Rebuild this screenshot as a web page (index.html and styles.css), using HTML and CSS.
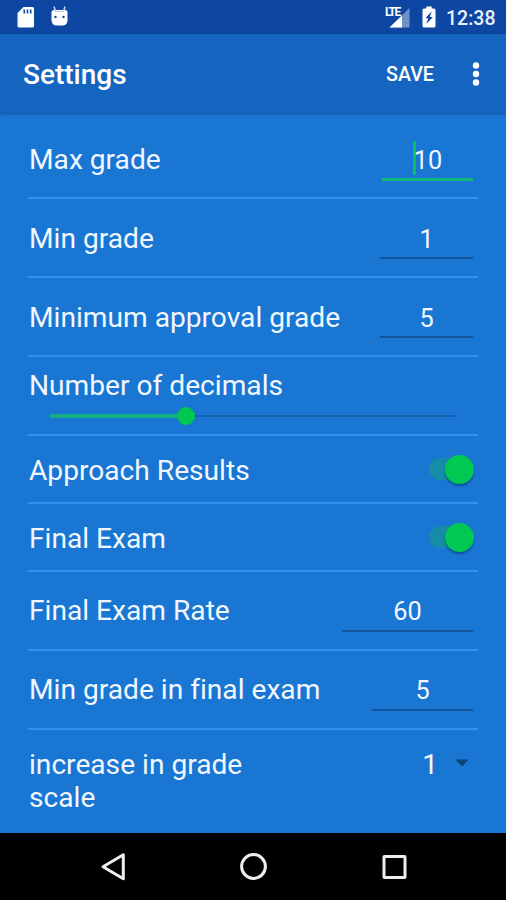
FILE: index.html
```html
<!DOCTYPE html>
<html lang="en">
<head>
<meta charset="utf-8">
<title>Settings</title>
<link rel="stylesheet" href="styles.css">
</head>
<body>
<div class="status">
  <svg class="sd" width="18" height="22" viewBox="0 0 18 22"><path fill="#fff" d="M6.500 1H15.500Q17 1 17 2.500V20Q17 21.500 15.500 21.500H2Q.5 21.500 .5 20V7Z"/><path stroke="#0d47a1" stroke-width="1.600" d="M7.300 3.500v4M10.500 3.500v4M13.700 3.500v4"/></svg>
  <svg class="droid" width="18" height="22" viewBox="0 0 18 22"><path fill="#fff" d="M.5 6.500Q.5 4 3 4H14Q16.500 4 16.500 6.500V14Q16.500 19.500 11 19.500H6Q.5 19.500 .5 14Z"/><path stroke="#c9d7f0" stroke-width="1.500" d="M3 .5l1.500 5M14 .5l-1.500 5"/><path stroke="#b4c7ea" d="M4 5.500h9"/><circle cx="4.500" cy="11" r="1.200" fill="#0d47a1"/><circle cx="12.500" cy="11" r="1.200" fill="#0d47a1"/></svg>
  <div class="right">
    <div class="signal"><span class="lte">LTE</span>
      <svg width="21" height="20" viewBox="0 0 21 20"><path fill="#6f91ca" d="M20.500 0V19.500H0.500Z"/><path fill="#fff" d="M13 7.500V19.500H.5Z"/></svg></div>
    <svg class="battery" width="14" height="22" viewBox="0 0 14 22"><path fill="#fff" d="M4.300 .5h5.400v2H12Q13.500 2.500 13.500 4V20Q13.500 21.500 12 21.500H2Q.5 21.500 .5 20V4Q.5 2.500 2 2.500H4.300Z"/><path fill="#0d47a1" d="M9.800 5.500L3.300 12.200H6.300L4.300 18L10.900 10.900H7.800Z"/></svg>
    <span class="clock">12:38</span>
  </div>
</div>
<header class="bar">
  <h1>Settings</h1>
  <span class="save">SAVE</span>
  <svg width="8" height="24" viewBox="0 0 8 24" fill="#fff"><circle cx="4" cy="3.500" r="3.200"/><circle cx="4" cy="12" r="3.200"/><circle cx="4" cy="20.500" r="3.200"/></svg>
</header>
<main class="list">
  <div class="row grade"><span class="label">Max grade</span><span class="field active"><span class="caret"></span>10</span></div>
  <div class="row grade"><span class="label">Min grade</span><span class="field small">1</span></div>
  <div class="row grade"><span class="label">Minimum approval grade</span><span class="field small">5</span></div>
  <div class="row slider-row"><span class="label">Number of decimals</span>
    <div class="slider"><span class="fill"></span><span class="thumb"></span><span class="rest"></span></div></div>
  <div class="row short"><span class="label">Approach Results</span><span class="switch"><span class="knob"></span></span></div>
  <div class="row short"><span class="label">Final Exam</span><span class="switch"><span class="knob"></span></span></div>
  <div class="row"><span class="label">Final Exam Rate</span><span class="field wide">60</span></div>
  <div class="row"><span class="label">Min grade in final exam</span><span class="field medium">5</span></div>
  <div class="row last"><span class="label">increase in grade<br>scale</span><span class="select">1<svg width="14" height="8" viewBox="0 0 14 8"><path fill="#0f4274" d="M.5 .5H13.500L7 7.500Z"/></svg></span></div>
</main>
<nav class="nav">
  <svg width="28" height="30" viewBox="0 0 28 30"><path d="M24.300 2.800V26.700L4 14.800Z"/></svg>
  <svg width="28" height="30" viewBox="0 0 28 30"><circle cx="13.500" cy="14.500" r="11.900"/></svg>
  <svg width="28" height="30" viewBox="0 0 28 30"><rect x="3" y="4.500" width="21" height="21" rx=".5"/></svg>
</nav>
</body>
</html>
```
FILE: styles.css
```css
* { box-sizing: border-box; }
body {
  margin: 0;
  width: 506px;
  height: 900px;
  overflow: hidden;
  display: flex;
  flex-direction: column;
  background: #1976d2;
  color: #f2f7ff;
  font-family: Roboto, sans-serif;
  font-variant-ligatures: none;
}
.status {
  height: 34px;
  flex: none;
  display: flex;
  align-items: flex-start;
  padding: 6px 10px 0 17px;
  background: #0d47a1;
}
.droid { margin-left: 16px; }
.right { display: flex; margin-left: auto; }
.signal { display: flex; width: 25px; height: 22px; justify-content: flex-end; align-items: flex-end; position: relative; }
.lte { position: absolute; left: 0; top: 0; font-size: 12px; line-height: 12px; font-weight: 700; letter-spacing: -1.6px; color: #fff; }
.battery { margin-left: 12px; }
.clock { margin-left: 10px; font-size: 19.5px; line-height: 25px; font-weight: 500; width: 50px; white-space: nowrap; color: #e8efff; }
.bar {
  height: 79px;
  flex: none;
  display: flex;
  align-items: center;
  padding: 0 26px 0 23px;
  background: #1565c0;
  box-shadow: 0 1px 3px rgba(0, 30, 80, .4);
  color: #fff;
}
.bar h1 { margin: 0; font-size: 28px; font-weight: 500; line-height: 36px; margin-top: 3px; }
.save { margin-left: auto; margin-right: 38px; font-size: 19.7px; font-weight: 500; margin-top: 2px; }
.list { flex: 1; padding: 7px 28px 0; }
.row {
  height: 79px;
  display: flex;
  justify-content: space-between;
  align-items: flex-start;
  padding: 22px 5px 0 0;
  border-bottom: 2px solid #3590ed;
}
.label { font-size: 28.15px; line-height: 34px; padding-left: 1px; white-space: nowrap; }
.grade .label { line-height: 36px; }
.field {
  width: 91px;
  height: 38px;
  display: flex;
  justify-content: center;
  font-size: 25.3px;
  line-height: 36px;
  border-bottom: 2px solid #125399;
}
.grade .field { line-height: 37px; }
.active { border-bottom: 3px solid #13b878; height: 39px; }
.caret { width: 3px; height: 34px; margin: -1px -2px 0 0; background: #08c05d; }
.small { width: 93px; }
.medium { width: 101px; }
.wide { width: 131px; }
.slider-row { flex-direction: column; justify-content: flex-start; padding-top: 12px; }
.slider { display: flex; align-items: center; width: 406px; height: 18px; margin: 4px 0 0 22px; }
.fill { width: 127px; height: 4px; background: #13b07f; }
.thumb { width: 18px; height: 18px; border-radius: 50%; background: #00c853; }
.rest { flex: 1; height: 2px; background: #1661ae; }
.short { height: 68px; padding: 18px 4px 0 0; }
.switch { width: 45px; height: 22px; margin-top: 4px; display: flex; align-items: center; justify-content: flex-end; border-radius: 11px; background: #168ca7; }
.knob { width: 29px; height: 29px; flex: none; border-radius: 50%; background: #00c853; box-shadow: 0 2px 2px rgba(0, 35, 90, .45); }
.last { height: 103px; padding-top: 18px; border: 0; }
.last .label { line-height: 33px; }
.select { display: flex; align-items: center; gap: 17px; padding-right: 4px; font-size: 28.1px; line-height: 33px; }
.select svg { margin-top: -3px; }
.nav {
  height: 67px;
  flex: none;
  display: flex;
  justify-content: center;
  align-items: center;
  gap: 113px;
  padding-left: 1px;
  background: #000;
}
.nav svg { fill: none; stroke: #eee; stroke-width: 3; stroke-linejoin: round; }
```
